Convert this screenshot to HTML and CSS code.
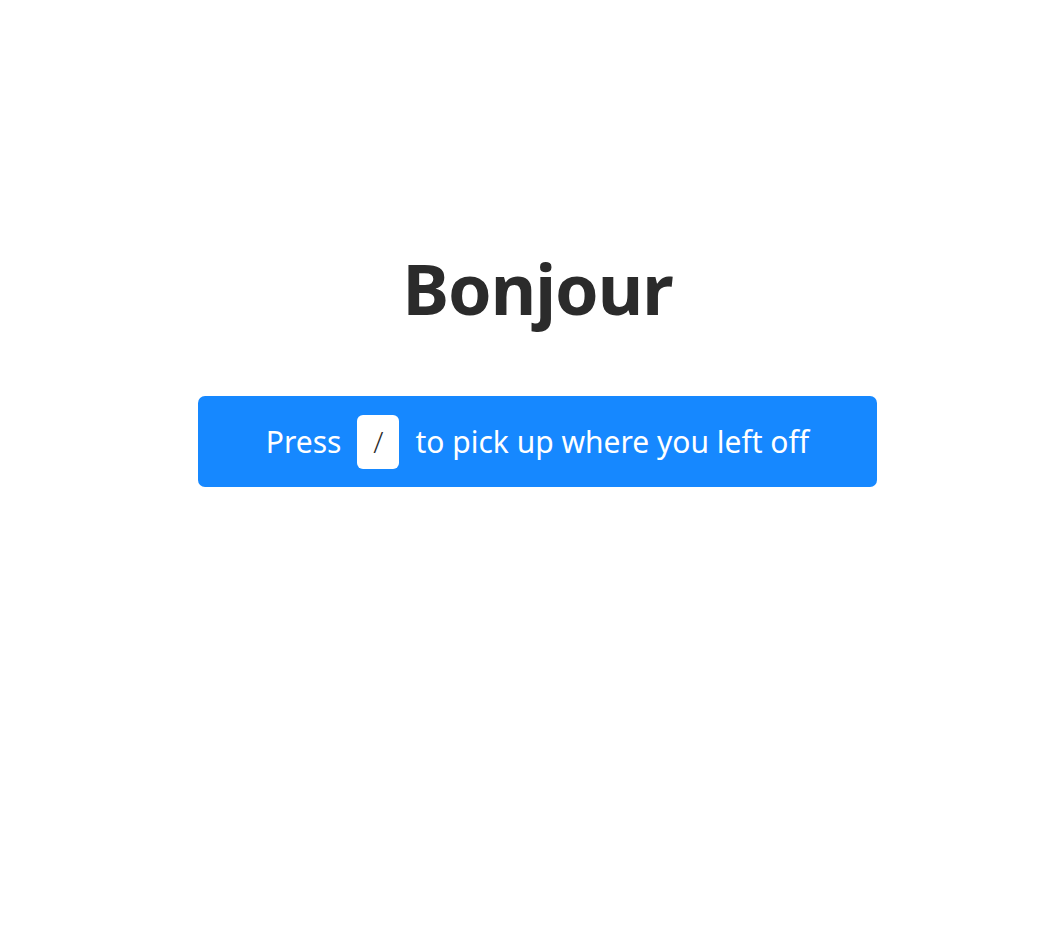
FILE: index.html
```html
<!DOCTYPE html>
<html lang="en">
<head>
<meta charset="utf-8">
<title>Bonjour</title>
<link rel="stylesheet" href="styles.css">
</head>
<body>
<main class="page">
  <h1 class="greeting">Bonjour</h1>
  <div class="banner">
    <span class="banner-text">Press</span>
    <kbd class="key">/</kbd>
    <span class="banner-text">to pick up where you left off</span>
  </div>
</main>
</body>
</html>
```
FILE: styles.css
```css
html, body {
  margin: 0;
  padding: 0;
  background: #ffffff;
}
body {
  font-family: "Noto Sans", "Open Sans", sans-serif;
}
.page {
  display: flex;
  flex-direction: column;
  align-items: center;
  padding-top: 240px;
  padding-left: 11px;
}
.greeting {
  margin: 0;
  font-size: 70px;
  font-weight: 700;
  color: #2b2b2b;
  line-height: 96px;
  letter-spacing: -1px;
}
.banner {
  margin-top: 60px;
  width: 679px;
  height: 91px;
  box-sizing: border-box;
  background: #1688ff;
  border-radius: 7px;
  display: flex;
  align-items: center;
  justify-content: center;
  gap: 16px;
  color: #ffffff;
  font-size: 30px;
  letter-spacing: 0;
}
.key {
  display: flex;
  align-items: center;
  justify-content: center;
  width: 42px;
  height: 54px;
  background: #ffffff;
  color: #2b2b2b;
  border-radius: 6px;
  font-family: "Open Sans", "Noto Sans", sans-serif;
  font-weight: 300;
  font-size: 30px;
}
```
